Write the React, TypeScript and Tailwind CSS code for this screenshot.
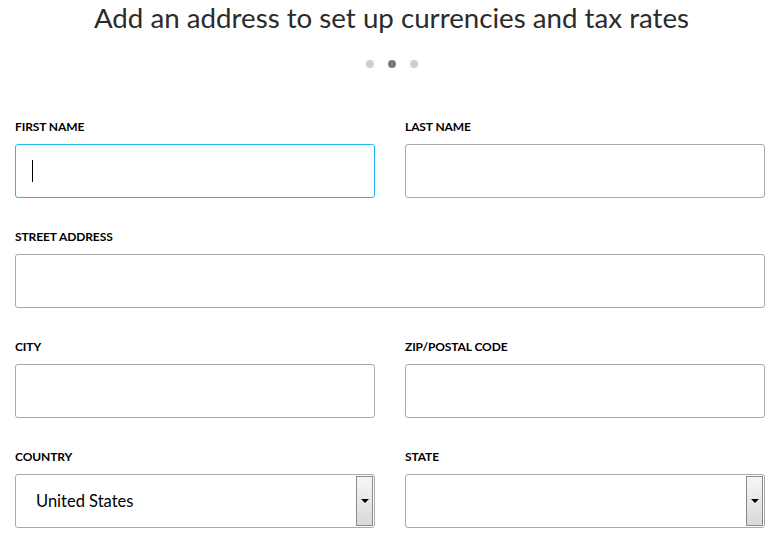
import React from 'react';

const font = { fontFamily: 'Lato, "Open Sans", sans-serif' };

function Label({ children }: { children: React.ReactNode }) {
  return (
    <div className="h-[16px] text-[12px] leading-[16px] font-bold uppercase text-black tracking-[-0.1px] mb-[9px]">
      {children}
    </div>
  );
}

function TextBox({ focused }: { focused?: boolean }) {
  return (
    <div
      className={
        focused
          ? 'h-[54px] rounded-[3px] border border-[#1fbcef] bg-white flex items-center pl-[16px]'
          : 'h-[54px] rounded-[3px] border border-[#a9a9a9] bg-white'
      }
    >
      {focused && <div className="w-px h-[22px] bg-black" />}
    </div>
  );
}

function SelectBox({ value }: { value?: string }) {
  return (
    <div className="h-[54px] rounded-[3px] border border-[#a9a9a9] bg-white flex items-stretch">
      <div className="flex-1 flex items-center pl-[20px] text-[16.5px] text-black">{value}</div>
      <div className="w-[17px] my-px mr-px border border-[#8a8a8a] bg-gradient-to-b from-[#f6f6f6] to-[#d9d9d9] flex items-center justify-center">
        <div className="w-0 h-0 border-l-[4px] border-r-[4px] border-t-[4px] border-l-transparent border-r-transparent border-t-black" />
      </div>
    </div>
  );
}

export default function App() {
  return (
    <div className="w-[783px] h-[538px] bg-white overflow-hidden" style={font}>
      <h1 className="text-center text-[27.7px] leading-[36px] text-[#2b2b2b]">
        Add an address to set up currencies and tax rates
      </h1>
      <div className="flex justify-center gap-[14px] mt-[24px]">
        <span className="w-[8px] h-[8px] rounded-full bg-[#cfcfcf]" />
        <span className="w-[8px] h-[8px] rounded-full bg-[#777]" />
        <span className="w-[8px] h-[8px] rounded-full bg-[#cfcfcf]" />
      </div>
      <div className="pl-[15px] pr-[18px] mt-[51px] grid grid-cols-2 gap-x-[30px] gap-y-[31px]">
        <div>
          <Label>First Name</Label>
          <TextBox focused />
        </div>
        <div>
          <Label>Last Name</Label>
          <TextBox />
        </div>
        <div className="col-span-2">
          <Label>Street Address</Label>
          <TextBox />
        </div>
        <div>
          <Label>City</Label>
          <TextBox />
        </div>
        <div>
          <Label>Zip/Postal Code</Label>
          <TextBox />
        </div>
        <div>
          <Label>Country</Label>
          <SelectBox value="United States" />
        </div>
        <div>
          <Label>State</Label>
          <SelectBox />
        </div>
      </div>
    </div>
  );
}
